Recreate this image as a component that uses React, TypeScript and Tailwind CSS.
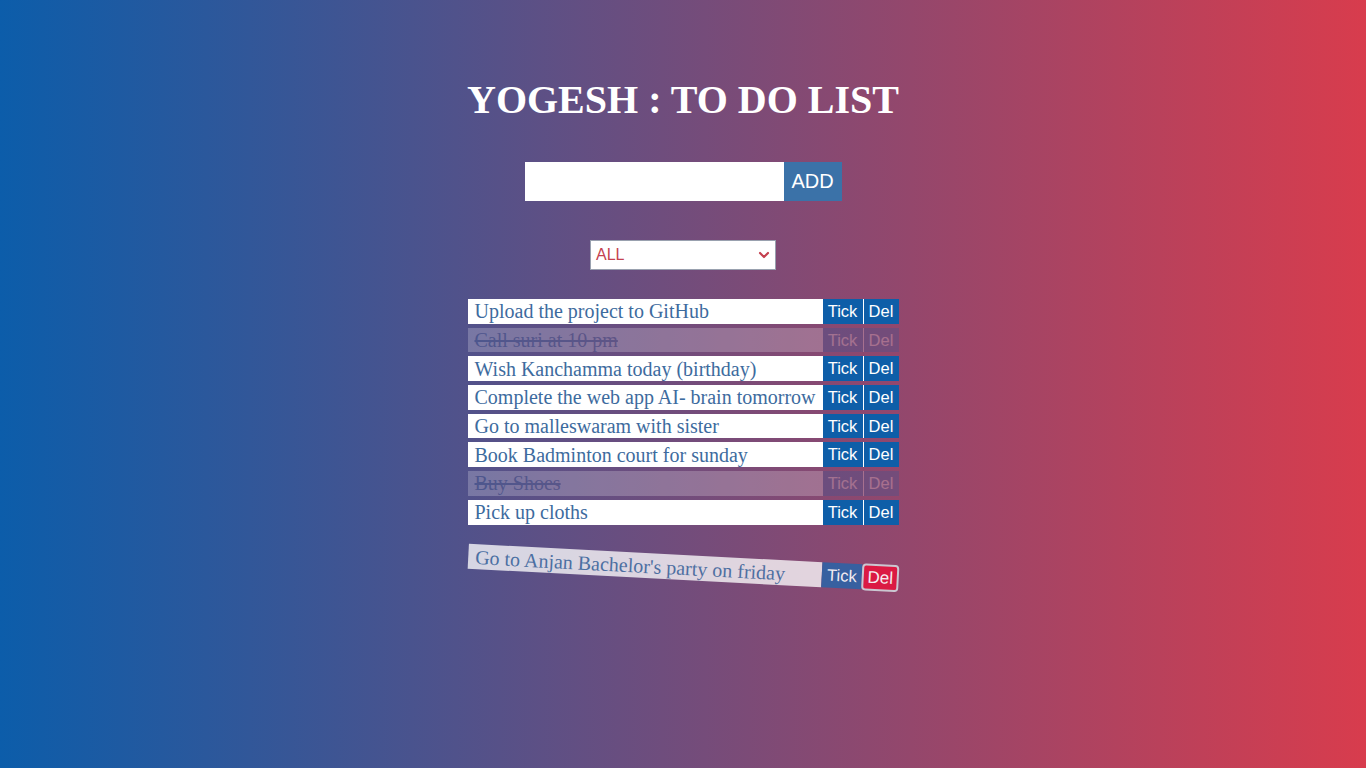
import { useState } from 'react'

type Todo = { text: string; done: boolean }

const initialTodos: Todo[] = [
  { text: 'Upload the project to GitHub', done: false },
  { text: 'Call suri at 10 pm', done: true },
  { text: 'Wish Kanchamma today (birthday)', done: false },
  { text: 'Complete the web app AI- brain tomorrow', done: false },
  { text: 'Go to malleswaram with sister', done: false },
  { text: 'Book Badminton court for sunday', done: false },
  { text: 'Buy Shoes', done: true },
  { text: 'Pick up cloths', done: false },
]

function TodoRow({ todo }: { todo: Todo }) {
  return (
    <li
      className={`flex h-[24.7px] w-[431px] items-stretch bg-white ${
        todo.done ? 'opacity-[0.22]' : ''
      }`}
    >
      <span
        className={`flex w-[355px] items-center bg-white pl-[7px] font-['Liberation_Serif',serif] text-[20px] text-[#3d6b9e] ${
          todo.done ? 'line-through' : ''
        }`}
      >
        {todo.text}
      </span>
      <button className="flex w-[40px] items-center justify-center bg-[#0e5ea8] font-['Liberation_Sans',sans-serif] text-[16.5px] text-white">
        Tick
      </button>
      <button className="ml-px flex w-[35px] items-center justify-center bg-[#0e5ea8] font-['Liberation_Sans',sans-serif] text-[16.5px] text-white">
        Del
      </button>
    </li>
  )
}

export default function App() {
  const [todos] = useState<Todo[]>(initialTodos)

  return (
    <div className="flex min-h-screen flex-col items-center bg-[linear-gradient(to_right,#0c5daa,#d83c4d)] font-['Liberation_Sans',sans-serif]">
      {/* Header */}
      <h1 className="mt-[76px] font-['Liberation_Serif',serif] text-[40px] font-bold leading-[48px] text-white">
        YOGESH : TO DO LIST
      </h1>

      {/* Form */}
      <div className="mt-[38px] flex">
        <input
          type="text"
          className="h-[39px] w-[259px] border-0 bg-white px-2 text-[18px] outline-none"
        />
        <button className="h-[39px] w-[58px] bg-[#3b72a8] pb-px text-[20px] text-white">ADD</button>
      </div>

      {/* Filter */}
      <div className="mt-[39px] flex h-[30px] w-[186px] items-center justify-between border border-gray-400 bg-white pl-[5px] pr-[3px]">
        <span className="text-[16px] text-[#c4414f]">ALL</span>
        <svg width="16" height="16" viewBox="0 0 24 24" fill="none" stroke="#c4414f" strokeWidth="3.2" strokeLinecap="round" strokeLinejoin="round">
          <path d="M6 9l6 6 6-6" />
        </svg>
      </div>

      {/* List */}
      <ul className="mt-[29px] flex flex-col gap-[4px]">
        {todos.map((t, i) => (
          <TodoRow key={i} todo={t} />
        ))}
      </ul>

      {/* Falling item */}
      <div className="mt-[30px] flex h-[25px] w-[431px] rotate-[3deg] items-stretch opacity-90">
        <span className="flex w-[355px] items-center bg-white/85 pl-[7px] font-['Liberation_Serif',serif] text-[20px] text-[#4a73a6]">
          Go to Anjan Bachelor's party on friday
        </span>
        <button className="flex w-[40px] items-center justify-center bg-[#2f63a6] text-[16.5px] text-white">
          Tick
        </button>
        <button className="-mt-[1px] flex h-[27px] w-[37px] items-center justify-center rounded-[4px] border-2 border-gray-300 bg-[#e4163f] text-[17px] text-white">
          Del
        </button>
      </div>
    </div>
  )
}
